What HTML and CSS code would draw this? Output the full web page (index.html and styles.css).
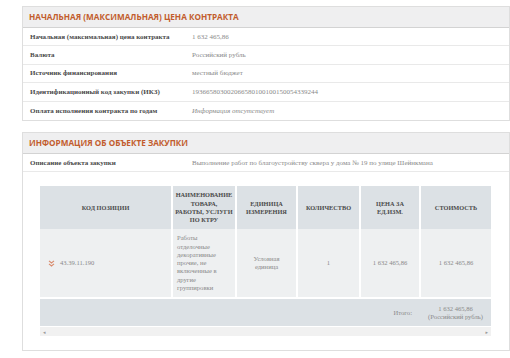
FILE: index.html
```html
<!DOCTYPE html>
<html lang="ru">
<head>
<meta charset="utf-8">
<link rel="stylesheet" href="styles.css">
</head>
<body>
<div class="page">
  <section class="card">
    <h2 class="card-title">Начальная (максимальная) цена контракта</h2>
    <div class="row"><div class="label">Начальная (максимальная) цена контракта</div><div class="value">1 632 465,86</div></div>
    <div class="row"><div class="label">Валюта</div><div class="value">Российский рубль</div></div>
    <div class="row"><div class="label">Источник финансирования</div><div class="value">местный бюджет</div></div>
    <div class="row"><div class="label">Идентификационный код закупки (ИКЗ)</div><div class="value">193665803002066580100100150054339244</div></div>
    <div class="row"><div class="label">Оплата исполнения контракта по годам</div><div class="value italic">Информация отсутствует</div></div>
  </section>

  <section class="card card-second">
    <h2 class="card-title">Информация об объекте закупки</h2>
    <div class="row"><div class="label">Описание объекта закупки</div><div class="value">Выполнение работ по благоустройству сквера у дома № 19 по улице Шейнкмана</div></div>
    <div class="table-wrap">
      <table class="items">
        <colgroup>
          <col class="c1"><col class="c2"><col class="c3"><col class="c4"><col class="c5"><col class="c6">
        </colgroup>
        <thead>
          <tr>
            <th>Код позиции</th>
            <th class="narrow">Наименование<br>товара,<br>работы, услуги<br>по КТРУ</th>
            <th>Единица измерения</th>
            <th>Количество</th>
            <th>Цена за<br>ед.изм.</th>
            <th>Стоимость</th>
          </tr>
        </thead>
        <tbody>
          <tr class="item">
            <td class="code"><span class="code-inner"><svg class="chev" width="7" height="7" viewBox="0 0 7 7"><path d="M1 0.8 L3.5 3 L6 0.8 M1 3.8 L3.5 6 L6 3.8" fill="none" stroke="#d98a6c" stroke-width="1.1"/></svg>43.39.11.190</span></td>
            <td class="name">Работы отделочные декоративные прочие, не включенные в другие группировки</td>
            <td class="center unit">Условная единица</td>
            <td class="center">1</td>
            <td class="center">1 632 465,86</td>
            <td class="center">1 632 465,86</td>
          </tr>
          <tr class="total">
            <td colspan="4"></td>
            <td class="total-label">Итого:</td>
            <td class="total-value">1 632 465,86<br>(Российский рубль)</td>
          </tr>
        </tbody>
      </table>
      <div class="scrollbar"><span class="arrow">&#9666;</span><span class="arrow">&#9656;</span></div>
    </div>
  </section>
</div>
</body>
</html>
```

FILE: styles.css
```css
html, body {
  margin: 0;
  padding: 0;
  background: #ffffff;
}
.page {
  padding: 6px 0 0 22px;
  font-family: "Liberation Serif", "DejaVu Serif", serif;
}
.card {
  width: 486px;
  border: 1px solid #dedede;
  background: #fff;
}
.card-second {
  margin-top: 11px;
  padding-bottom: 14px;
}
.card-title {
  margin: 0;
  height: 20px;
  line-height: 20px;
  padding-left: 6px;
  background: #efeff0;
  border-bottom: 1px solid #d3d3d3;
  font-family: "Open Sans", "Noto Sans", sans-serif;
  font-weight: 700;
  font-size: 8.2px;
  text-transform: uppercase;
  color: #c25d2e;
}
.row {
  display: flex;
  align-items: center;
  height: 18.4px;
  box-sizing: border-box;
  border-bottom: 1px solid #e9e9e9;
  font-size: 7px;
}
.row:last-child { border-bottom: none; }
.label {
  width: 162px;
  padding-left: 7px;
  font-weight: 700;
  color: #4a4a4a;
}
.value {
  color: #8a8a8a;
}
.italic { font-style: italic; }

.table-wrap {
  margin: 14px 0 0 17px;
  width: 451px;
}
.items {
  width: 451px;
  border-collapse: collapse;
  table-layout: fixed;
  font-size: 6.6px;
}
.c1 { width: 132px; }
.c2 { width: 64px; }
.c3 { width: 61px; }
.c4 { width: 63px; }
.c5 { width: 60px; }
.c6 { width: 71px; }
.items th {
  background: #dce1e5;
  height: 43px;
  padding: 0 3px;
  font-weight: 700;
  font-size: 6.3px;
  text-transform: uppercase;
  color: #4a4a4a;
  line-height: 8.3px;
  border-left: 2px solid #fff;
  text-align: center;
}
.items th.narrow { padding: 0 1px; white-space: nowrap; }
.items th:first-child { border-left: none; }
.item td {
  background: #eef0f1;
  height: 68px;
  color: #8a8a8a;
  border-left: 2px solid #fff;
  line-height: 8.3px;
  vertical-align: middle;
  padding: 0 4px;
}
.item td:first-child { border-left: none; }
.center { text-align: center; }
.item td.unit { padding: 0 10px; }
.code { padding-left: 8px !important; }
.code-inner {
  display: flex;
  align-items: center;
  gap: 5px;
}
.chev { flex: none; }
.name { text-align: left; }
.total td {
  background: #dce1e5;
  height: 25px;
  border-top: 2px solid #fff;
  color: #8a8a8a;
  line-height: 8.3px;
}
.total-label {
  text-align: right;
  padding-right: 8px;
}
.total-value {
  text-align: center;
  white-space: nowrap;
}
.scrollbar {
  display: flex;
  justify-content: space-between;
  align-items: center;
  height: 9px;
  margin-top: 1px;
  background: #f1f1f1;
  padding: 0 3px;
  font-size: 5px;
  color: #9a9a9a;
}
```
